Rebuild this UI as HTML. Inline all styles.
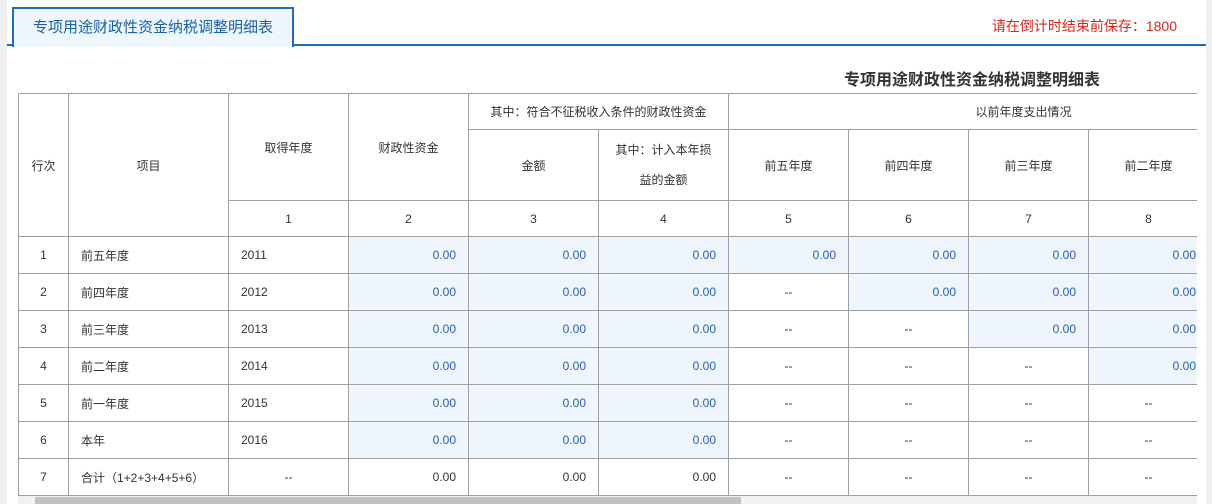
<!DOCTYPE html>
<html><head><meta charset="utf-8"><style>
*{margin:0;padding:0;box-sizing:border-box}
body{width:1212px;height:504px;overflow:hidden;background:#fff;position:relative;font-family:"Liberation Sans","Noto Sans CJK SC",sans-serif;font-size:12px;color:#333}
.lstrip{position:absolute;left:0;top:0;width:7px;height:504px;background:#eeeff1}
.rstrip{position:absolute;right:0;top:0;width:6px;height:504px;background:#eeeff1}
.tab{position:absolute;left:12px;top:7px;width:282px;height:40px;border:2px solid #1a6ebd;border-bottom:none;background:#eef7fd;color:#1a5fa8;font-size:15px;text-align:center;line-height:38px}
.line{position:absolute;left:7px;right:6px;top:44px;height:2px;background:#1a6ebd}
.tab2{position:absolute;left:14px;top:44px;width:278px;height:2px;background:#eef7fd}
.timer{position:absolute;right:35px;top:16px;color:#d9261c;font-size:14px}
.title{position:absolute;left:844px;top:66px;font-size:16px;font-weight:bold;color:#333}
.wrap{position:absolute;left:18px;top:93px;width:1179px;height:403px;overflow:hidden}
table{border-collapse:collapse;table-layout:fixed;width:1300px}
td{border:1px solid #a0a0a0;text-align:center;white-space:nowrap;overflow:hidden}
tr.d td{height:37px}
.l{text-align:left;padding-left:12px}
.b{background:#eef5fd;color:#2a5db0;text-align:right;padding-right:12px}
.r{text-align:right;padding-right:12px}
.sb{position:absolute;left:18px;top:496px;width:1179px;height:8px;background:#f1f1f1}
.th{position:absolute;left:35px;top:497px;width:706px;height:7px;background:#c1c1c1}
</style></head><body>
<div class="lstrip"></div><div class="rstrip"></div>
<div class="line"></div>
<div class="tab">专项用途财政性资金纳税调整明细表</div>
<div class="tab2"></div>
<div class="timer">请在倒计时结束前保存：1800</div>
<div class="title">专项用途财政性资金纳税调整明细表</div>
<div class="wrap"><table>
<colgroup><col style="width:50px"><col style="width:160px"><col style="width:120px"><col style="width:120px"><col style="width:130px"><col style="width:130px"><col style="width:120px"><col style="width:120px"><col style="width:120px"><col style="width:120px"><col style="width:110px"></colgroup>
<tr style="height:36px"><td rowspan="3" style="height:143px">行次</td><td rowspan="3">项目</td><td rowspan="2">取得年度</td><td rowspan="2">财政性资金</td><td colspan="2">其中：符合不征税收入条件的财政性资金</td><td colspan="5">以前年度支出情况</td></tr>
<tr style="height:71px"><td>金额</td><td style="line-height:30px">其中：计入本年损<br>益的金额</td><td>前五年度</td><td>前四年度</td><td>前三年度</td><td>前二年度</td><td>前一年度</td></tr>
<tr style="height:36px"><td>1</td><td>2</td><td>3</td><td>4</td><td>5</td><td>6</td><td>7</td><td>8</td><td>9</td></tr>
<tr class="d"><td>1</td><td class="l">前五年度</td><td class="l">2011</td><td class="b">0.00</td><td class="b">0.00</td><td class="b">0.00</td><td class="b">0.00</td><td class="b">0.00</td><td class="b">0.00</td><td class="b">0.00</td><td class="b">0.00</td></tr>
<tr class="d"><td>2</td><td class="l">前四年度</td><td class="l">2012</td><td class="b">0.00</td><td class="b">0.00</td><td class="b">0.00</td><td>--</td><td class="b">0.00</td><td class="b">0.00</td><td class="b">0.00</td><td class="b">0.00</td></tr>
<tr class="d"><td>3</td><td class="l">前三年度</td><td class="l">2013</td><td class="b">0.00</td><td class="b">0.00</td><td class="b">0.00</td><td>--</td><td>--</td><td class="b">0.00</td><td class="b">0.00</td><td class="b">0.00</td></tr>
<tr class="d"><td>4</td><td class="l">前二年度</td><td class="l">2014</td><td class="b">0.00</td><td class="b">0.00</td><td class="b">0.00</td><td>--</td><td>--</td><td>--</td><td class="b">0.00</td><td class="b">0.00</td></tr>
<tr class="d"><td>5</td><td class="l">前一年度</td><td class="l">2015</td><td class="b">0.00</td><td class="b">0.00</td><td class="b">0.00</td><td>--</td><td>--</td><td>--</td><td>--</td><td class="b">0.00</td></tr>
<tr class="d"><td>6</td><td class="l">本年</td><td class="l">2016</td><td class="b">0.00</td><td class="b">0.00</td><td class="b">0.00</td><td>--</td><td>--</td><td>--</td><td>--</td><td>--</td></tr>
<tr class="d"><td>7</td><td class="l">合计（1+2+3+4+5+6）</td><td>--</td><td class="r">0.00</td><td class="r">0.00</td><td class="r">0.00</td><td>--</td><td>--</td><td>--</td><td>--</td><td>--</td></tr>
</table></div>
<div class="sb"></div><div class="th"></div>
</body></html>
